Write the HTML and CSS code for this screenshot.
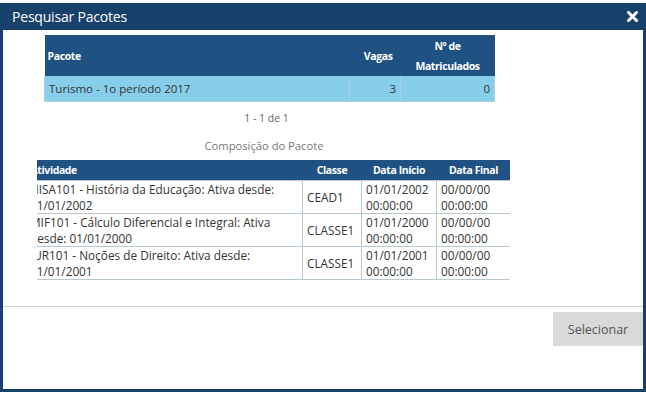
FILE: index.html
```html
<!DOCTYPE html>
<html>
<head>
<meta charset="utf-8">
<link rel="stylesheet" href="styles.css">
</head>
<body>
<div class="dialog">
  <div class="dialog-header">
    <span class="dialog-title">Pesquisar Pacotes</span>
    <svg class="close" width="11" height="11" viewBox="0 0 11 11"><path d="M1.5 1.5 L9.5 9.5 M9.5 1.5 L1.5 9.5" stroke="#fff" stroke-width="3" stroke-linecap="square"/></svg>
  </div>
  <div class="dialog-body">
    <table class="grid packs">
      <thead>
        <tr><th class="c-pacote">Pacote</th><th class="c-vagas">Vagas</th><th class="c-matr">Nº de<br>Matriculados</th></tr>
      </thead>
      <tbody>
        <tr class="selected"><td>Turismo - 1o período 2017</td><td class="num">3</td><td class="num">0</td></tr>
      </tbody>
    </table>
    <div class="pager">1 - 1 de 1</div>
    <div class="section-title">Composição do Pacote</div>
    <div class="scroll">
      <table class="grid comp">
        <colgroup>
          <col class="w-ativ"><col class="w-classe"><col class="w-ini"><col class="w-fim">
        </colgroup>
        <thead>
          <tr><th class="c-ativ">Atividade</th><th>Classe</th><th>Data Início</th><th>Data Final</th></tr>
        </thead>
        <tbody>
          <tr><td class="ativ">HISA101 - História da Educação: Ativa desde: 01/01/2002</td><td>CEAD1</td><td>01/01/2002 00:00:00</td><td>00/00/00 00:00:00</td></tr>
          <tr><td class="ativ">MIF101 - Cálculo Diferencial e Integral: Ativa desde: 01/01/2000</td><td>CLASSE1</td><td>01/01/2000 00:00:00</td><td>00/00/00 00:00:00</td></tr>
          <tr><td class="ativ">JUR101 - Noções de Direito: Ativa desde: 01/01/2001</td><td>CLASSE1</td><td>01/01/2001 00:00:00</td><td>00/00/00 00:00:00</td></tr>
        </tbody>
      </table>
    </div>
  </div>
  <div class="dialog-footer">
    <button class="btn">Selecionar</button>
  </div>
</div>
</body>
</html>
```
FILE: styles.css
```css
html, body {
  margin: 0;
  padding: 0;
  background: #fff;
}
body {
  font-family: "Open Sans", "Noto Sans", sans-serif;
  color: #333;
  padding-top: 3px;
}
.dialog {
  width: 646px;
  height: 389px;
  box-sizing: border-box;
  border: 3px solid #17406b;
  border-top: 0;
  display: flex;
  flex-direction: column;
}
.dialog-header {
  background: #17406b;
  height: 27px;
  margin: 0 -3px;
  display: flex;
  align-items: center;
  justify-content: space-between;
  padding: 0 8px 0 12px;
}
.dialog-title {
  color: #fff;
  font-size: 14px;
  letter-spacing: -0.2px;
}
.close { display: block; }
.dialog-body {
  flex: 1;
  padding: 5px 0 0 41px;
}
.grid {
  border-collapse: collapse;
  font-size: 12px;
}
.grid th {
  background: #1f5282;
  color: #fff;
  font-weight: bold;
  font-size: 10.5px;
  letter-spacing: -0.4px;
  padding: 0 3px;
}
.packs {
  width: 451px;
}
.packs th {
  height: 41px;
  line-height: 20px;
}
.packs .c-pacote { text-align: left; }
.packs .c-vagas { width: 40px; text-align: right; padding-right: 8px; }
.packs .c-matr { width: 88px; text-align: center; }
.packs td {
  height: 25px;
  background: #87ceeb;
  border: 1px solid #aecfdd;
  border-top: 0;
  padding: 0 4px;
  font-size: 11.5px;
}
.packs td.num { text-align: right; }
.pager {
  width: 445px;
  text-align: center;
  font-size: 10.5px;
  color: #666;
  padding-top: 9px;
  height: 17px;
}
.section-title {
  width: 440px;
  text-align: center;
  font-size: 11.2px;
  color: #777;
  margin-top: 10px;
  height: 22px;
}
.scroll {
  margin-left: -7px;
  width: 473px;
  overflow: hidden;
}
.comp {
  margin-left: -9px;
  width: 482px;
  table-layout: fixed;
}
.w-ativ { width: 274px; }
.w-classe { width: 59px; }
.w-ini { width: 75px; }
.w-fim { width: 74px; }
.comp th {
  height: 20px;
  padding: 0 4px;
  text-align: center;
}
.comp th.c-ativ { text-align: left; padding-left: 2px; }
.comp td {
  border: 1px solid #b8c8d0;
  padding: 0 4px;
  font-size: 11.8px;
  line-height: 16px;
  height: 32px;
  vertical-align: middle;
}
.comp td.ativ { padding-left: 1px; }
.dialog-footer {
  border-top: 1px solid #cccccc;
  height: 77px;
  padding-top: 5px;
  display: flex;
  justify-content: flex-end;
  align-items: flex-start;
}
.btn {
  width: 90px;
  height: 34px;
  background: #d9d9d9;
  border: 0;
  color: #555;
  font-family: "Open Sans", sans-serif;
  font-size: 12.5px;
}
```
